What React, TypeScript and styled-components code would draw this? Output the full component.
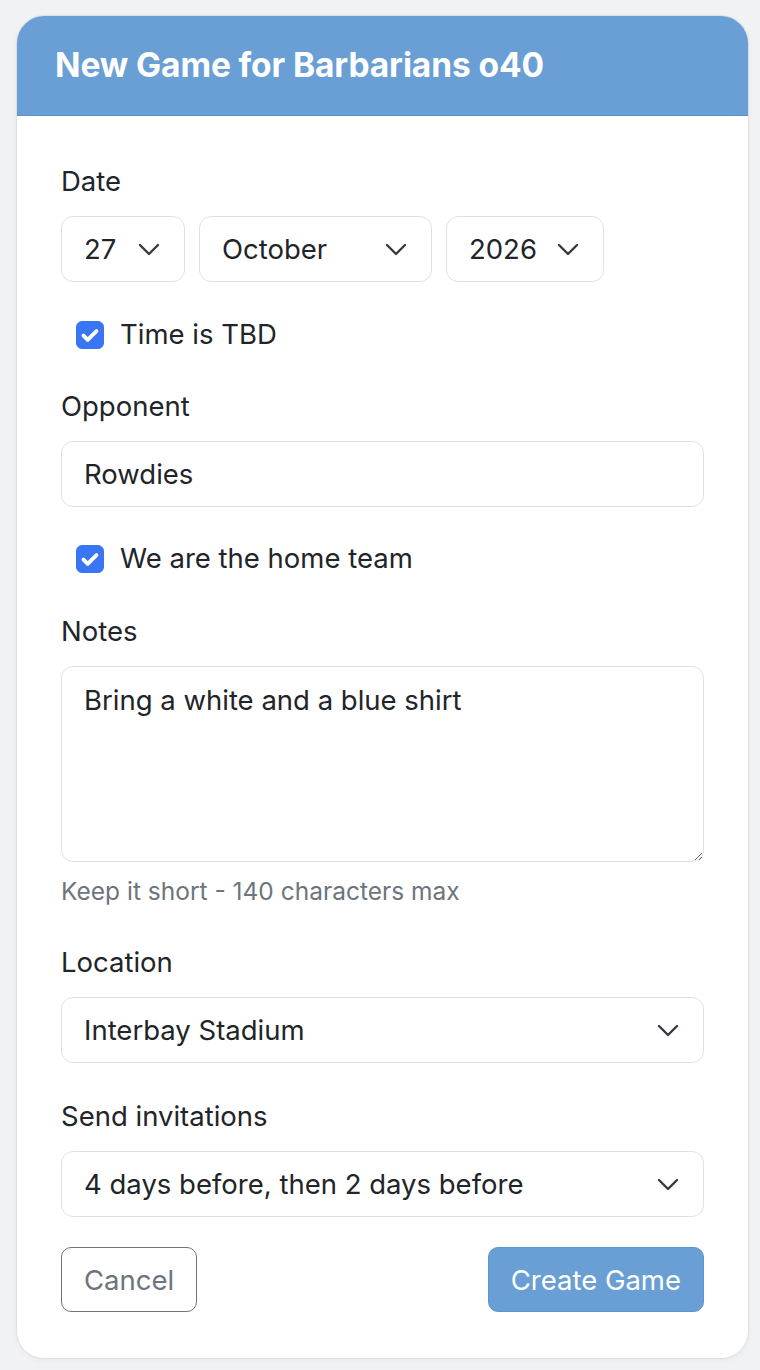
import { createGlobalStyle, styled } from "styled-components";

const chevron = encodeURIComponent(
    `<svg xmlns="http://www.w3.org/2000/svg" viewBox="0 0 22 13"><path d="M2 2l9 9 9-9" fill="none" stroke="#343a40" stroke-width="2.4" stroke-linecap="round" stroke-linejoin="round"/></svg>`
);

const check = encodeURIComponent(
    `<svg xmlns="http://www.w3.org/2000/svg" viewBox="0 0 20 20"><path d="M5 10.5l3.2 3.2L15 7" fill="none" stroke="#fff" stroke-width="3" stroke-linecap="round" stroke-linejoin="round"/></svg>`
);

const GlobalStyle = createGlobalStyle`
    html, body {
        margin: 0;
        background: #f1f2f4;
    }
    body {
        padding: 15px 11px 13px 16px;
        font-family: Inter, "Noto Sans", "Liberation Sans", sans-serif;
        color: #212529;
    }
    * {
        box-sizing: border-box;
    }
`;

const Card = styled.div`
    background: #fff;
    border: 1px solid #dcdfe4;
    border-radius: 28px;
    overflow: hidden;
    box-shadow: 0 2px 6px rgba(0, 0, 0, 0.04);
`;

const Header = styled.div`
    height: 100px;
    display: flex;
    align-items: center;
    padding: 0 38px;
    background: #699fd4;
    border-bottom: 1px solid #5b92ca;
`;

const Title = styled.h1`
    margin: 0 0 2px;
    font-size: 33.5px;
    font-weight: 700;
    color: #fff;
    letter-spacing: -0.1px;
`;

const Body = styled.div`
    padding: 46px 44px 46px 44px;
`;

const Field = styled.div<{ $mb?: number }>`
    margin-bottom: ${(p) => p.$mb ?? 32}px;
`;

const Label = styled.label`
    display: block;
    font-size: 27.5px;
    line-height: 39px;
    margin-bottom: 15px;
`;

const DateRow = styled.div`
    display: flex;
    gap: 14px;
`;

const Select = styled.select<{ $w?: number }>`
    appearance: none;
    display: block;
    width: ${(p) => (p.$w ? `${p.$w}px` : "100%")};
    height: 66px;
    padding: 0 60px 0 22px;
    font-family: inherit;
    font-size: 27.5px;
    color: #212529;
    background-color: #fff;
    background-image: url("data:image/svg+xml,${chevron}");
    background-repeat: no-repeat;
    background-position: right 24px center;
    background-size: 22px 13px;
    border: 1px solid #dee2e6;
    border-radius: 12px;
    outline: none;
`;

const Input = styled.input`
    display: block;
    width: 100%;
    height: 66px;
    padding: 0 22px;
    font-family: inherit;
    font-size: 27.5px;
    color: #212529;
    border: 1px solid #dee2e6;
    border-radius: 12px;
    outline: none;
`;

const TextArea = styled.textarea`
    display: block;
    width: 100%;
    height: 196px;
    padding: 14px 22px;
    font-family: inherit;
    font-size: 27.5px;
    line-height: 39px;
    color: #212529;
    border: 1px solid #dee2e6;
    border-radius: 12px;
    outline: none;
    resize: vertical;
`;

const Help = styled.div`
    margin-top: 13px;
    font-size: 24.5px;
    line-height: 33px;
    color: #6c757d;
`;

const CheckRow = styled.label`
    display: flex;
    align-items: center;
    gap: 16px;
    padding-left: 15px;
    font-size: 27.5px;
    line-height: 39px;
`;

const Check = styled.input`
    appearance: none;
    margin: 0;
    width: 28px;
    height: 28px;
    border-radius: 6px;
    background-color: #3a76f2;
    background-image: url("data:image/svg+xml,${check}");
    background-size: 100% 100%;
    border: 1px solid #3a76f2;
`;

const Actions = styled.div`
    display: flex;
    justify-content: space-between;
    padding-top: 30px;
`;

const Button = styled.button<{ $primary?: boolean }>`
    height: 65px;
    padding: 0 22px;
    font-family: inherit;
    font-size: 27.5px;
    border-radius: 10px;
    cursor: pointer;
    color: ${(p) => (p.$primary ? "#fff" : "#6c757d")};
    background: ${(p) => (p.$primary ? "#699fd4" : "#fff")};
    border: 1px solid ${(p) => (p.$primary ? "#5e98d2" : "#6c757d")};
`;

export default function App() {
    return (
        <>
            <GlobalStyle />
            <Card>
                <Header>
                    <Title>New Game for Barbarians o40</Title>
                </Header>
                <Body>
                    <Field $mb={33}>
                        <Label>Date</Label>
                        <DateRow>
                            <Select $w={124} defaultValue="27">
                                <option>27</option>
                            </Select>
                            <Select $w={233} defaultValue="October">
                                <option>October</option>
                            </Select>
                            <Select $w={158} defaultValue="2026">
                                <option>2026</option>
                            </Select>
                        </DateRow>
                    </Field>
                    <Field $mb={33}>
                        <CheckRow>
                            <Check type="checkbox" defaultChecked />
                            Time is TBD
                        </CheckRow>
                    </Field>
                    <Field $mb={32}>
                        <Label>Opponent</Label>
                        <Input defaultValue="Rowdies" />
                    </Field>
                    <Field $mb={34}>
                        <CheckRow>
                            <Check type="checkbox" defaultChecked />
                            We are the home team
                        </CheckRow>
                    </Field>
                    <Field $mb={35}>
                        <Label>Notes</Label>
                        <TextArea defaultValue="Bring a white and a blue shirt" />
                        <Help>Keep it short - 140 characters max</Help>
                    </Field>
                    <Field $mb={34}>
                        <Label>Location</Label>
                        <Select defaultValue="Interbay Stadium">
                            <option>Interbay Stadium</option>
                        </Select>
                    </Field>
                    <Field $mb={0}>
                        <Label>Send invitations</Label>
                        <Select defaultValue="4 days before, then 2 days before">
                            <option>4 days before, then 2 days before</option>
                        </Select>
                    </Field>
                    <Actions>
                        <Button>Cancel</Button>
                        <Button $primary>Create Game</Button>
                    </Actions>
                </Body>
            </Card>
        </>
    );
}
